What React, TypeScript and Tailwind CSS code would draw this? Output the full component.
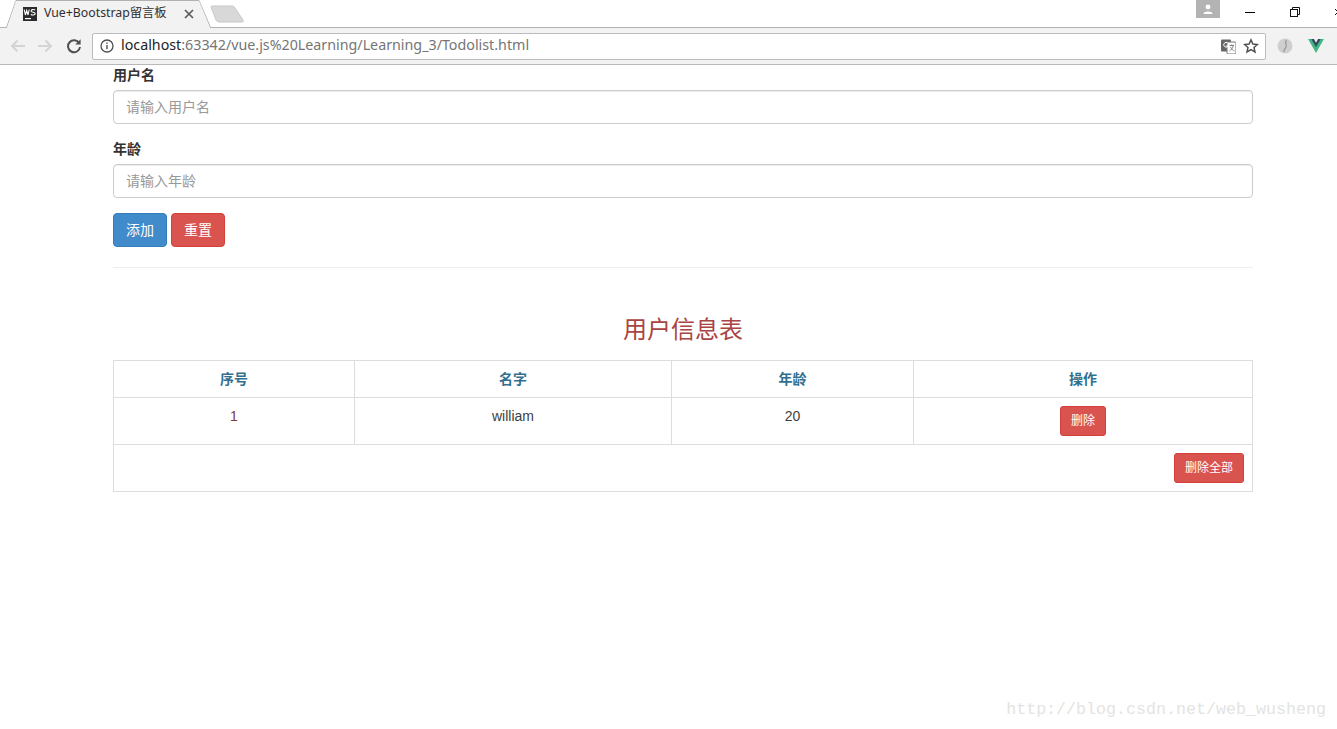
const FONT = "font-['Liberation_Sans','Noto_Sans_CJK_SC',sans-serif]";
const UI_FONT = "font-['Noto_Sans','Noto_Sans_CJK_SC',sans-serif]";

function WsLogo() {
  return (
    <svg width="14" height="14" viewBox="0 0 14 14" className="shrink-0">
      <rect width="14" height="14" fill="#2b2b2b" />
      <path d="M1.2 2.5 L2.4 8 L3.7 3.5 L5 8 L6.2 2.5" fill="none" stroke="#fff" strokeWidth="1.1" />
      <path d="M12.2 3 C10 2 8 2.6 8.2 4.2 C8.4 5.6 12.2 5 12.2 6.6 C12.2 8.2 9.5 8.4 7.8 7.6" fill="none" stroke="#fff" strokeWidth="1.1" />
      <rect x="2" y="11" width="6" height="1.2" fill="#fff" />
    </svg>
  );
}

function TabStrip() {
  return (
    <div className="relative h-[28px] bg-white border-b border-[#b2b2b2] flex">
      <svg width="260" height="28" viewBox="0 0 260 28" className="absolute left-0 top-0">
        <path d="M0 27.5 H6.5 L16 0.5 H199 L210.5 27.5" fill="#f2f2f2" stroke="#b2b2b2" strokeWidth="1" />
        <path d="M7 28 L16 1 H199 L210 28 Z" fill="#f2f2f2" />
        <path d="M211 7 Q211 6 212 6 H232 Q234 6 235 8 L243 20 Q244 22 242 22 H219 Q217 22 216 20 Z" fill="#d8d8d8" stroke="#c8c8c8" strokeWidth="1" />
      </svg>
      <div className="relative ml-[23px] w-[171px] h-[27px] flex items-center">
        <WsLogo />
        <span className={`${UI_FONT} ml-[7px] text-[12.3px] text-[#303030] whitespace-nowrap`}>Vue+Bootstrap留言板</span>
        <svg width="10" height="10" viewBox="0 0 10 10" className="ml-auto shrink-0">
          <path d="M1 1 L9 9 M9 1 L1 9" stroke="#5a5a5a" strokeWidth="1.7" />
        </svg>
      </div>
      <div className="relative ml-auto flex items-start h-[27px]">
        <div className="w-[24px] h-[18px] bg-[#b3b3b3] flex items-center justify-center">
          <svg width="12" height="10" viewBox="0 0 12 10">
            <circle cx="6" cy="3" r="2.4" fill="#fff" />
            <path d="M1.5 10 C1.5 6.8 10.5 6.8 10.5 10 Z" fill="#fff" />
          </svg>
        </div>
        <div className="w-[60px] h-[24px] flex items-center justify-center">
          <div className="w-[10px] h-px bg-black" />
        </div>
        <div className="w-[29px] h-[24px] flex items-center justify-center">
          <svg width="10" height="10" viewBox="0 0 10 10" fill="none" stroke="#111" strokeWidth="1">
            <rect x="0.5" y="2.5" width="7" height="7" />
            <path d="M2.5 2.5 V0.5 H9.5 V7.5 H7.5" />
          </svg>
        </div>
        <div className="w-[28px] h-[24px] overflow-hidden flex items-center justify-end">
          <svg width="2" height="10" viewBox="0 0 2 10">
            <path d="M0 2 L3 5 M0 8 L3 5" stroke="#111" strokeWidth="1" />
          </svg>
        </div>
      </div>
    </div>
  );
}

function Toolbar() {
  return (
    <div className="h-[37px] bg-[#f2f2f2] border-b border-[#b8b8b8] flex items-center">
      <div className="w-[92px] shrink-0 flex items-center pl-[10px] gap-[11px]">
        <svg width="16" height="14" viewBox="0 0 16 14" fill="none" stroke="#d4d4d4" strokeWidth="2">
          <path d="M15 7 H2 M7.5 1.5 L2 7 L7.5 12.5" />
        </svg>
        <svg width="16" height="14" viewBox="0 0 16 14" fill="none" stroke="#d4d4d4" strokeWidth="2">
          <path d="M1 7 H14 M8.5 1.5 L14 7 L8.5 12.5" />
        </svg>
        <svg width="16" height="16" viewBox="0 0 16 16" fill="none" className="ml-[2px]">
          <path d="M13.2 5.2 A6 6 0 1 0 14 9" stroke="#505050" strokeWidth="2" />
          <path d="M14.6 1.2 V6.6 H9.2 Z" fill="#505050" />
        </svg>
      </div>
      <div className="w-[1174px] h-[27px] shrink-0 bg-white border border-[#bcbcbc] rounded-[2px] flex items-center pl-[7px] pr-[6px]">
        <svg width="14" height="14" viewBox="0 0 14 14" fill="none" className="shrink-0">
          <circle cx="7" cy="7" r="6" stroke="#505050" strokeWidth="1.3" />
          <rect x="6.3" y="6" width="1.4" height="4.2" fill="#505050" />
          <rect x="6.3" y="3.5" width="1.4" height="1.4" fill="#505050" />
        </svg>
        <span className={`${UI_FONT} ml-[7px] pb-[2px] text-[14.28px] text-[#222] whitespace-nowrap`}>
          localhost<span className="text-[#757575]">:63342/vue.js%20Learning/Learning_3/Todolist.html</span>
        </span>
        <svg width="15" height="15" viewBox="0 0 15 15" className="ml-auto shrink-0">
          <rect x="0" y="0.5" width="10" height="12" rx="1" fill="#666" />
          <rect x="6" y="3" width="9" height="12" rx="1" fill="#fff" stroke="#777" />
          <path d="M8.5 6.5 H13 M10.7 5.5 V6.5 M12.3 6.5 C12 9 10 11 8.5 12 M9.6 8 C10.4 10 12 11.5 13.5 12" fill="none" stroke="#777" strokeWidth="0.9" />
          <path d="M6.8 4 A2.4 2.4 0 1 0 7.2 7 H5" fill="none" stroke="#fff" strokeWidth="1" />
        </svg>
        <svg width="16" height="16" viewBox="0 0 24 24" fill="none" stroke="#505050" strokeWidth="2.2" className="ml-[7px] shrink-0">
          <path d="M12 2.8 L14.8 9 L21.6 9.7 L16.5 14.2 L18 20.9 L12 17.5 L6 20.9 L7.5 14.2 L2.4 9.7 L9.2 9 Z" />
        </svg>
      </div>
      <div className="flex items-center ml-[11px] gap-[15px]">
        <svg width="16" height="16" viewBox="0 0 16 16">
          <circle cx="8" cy="8" r="7.5" fill="#cfcfcf" />
          <path d="M9.5 2 C6.5 5 11.5 7 8.5 10 C7.5 11 6.5 12 7 14" fill="none" stroke="#9a9a9a" strokeWidth="1.3" />
        </svg>
        <svg width="16" height="14" viewBox="0 0 17 15">
          <path d="M0 0 H17 L8.5 15 Z" fill="#41b883" />
          <path d="M3.5 0 H13.5 L8.5 8.8 Z" fill="#35495e" />
          <path d="M6.3 0 H10.7 L8.5 3.9 Z" fill="#f2f2f2" />
        </svg>
      </div>
    </div>
  );
}

function Field({ label, placeholder, className }: { label: string; placeholder: string; className?: string }) {
  return (
    <div className={className}>
      <label className="block h-[20px] mb-[5px] text-[14px] leading-[20px] font-bold text-[#333]">{label}</label>
      <input
        readOnly
        placeholder={placeholder}
        className="block w-full h-[34px] px-[12px] text-[14px] bg-white border border-[#ccc] rounded-[4px] shadow-[inset_0_1px_1px_rgba(0,0,0,0.075)] placeholder:text-[#999] outline-none"
      />
    </div>
  );
}

const headCell = "border border-[#ddd] h-[37px] p-0 text-center align-middle text-[14px] font-bold text-[#31708f]";
const bodyCell = "border border-[#ddd] h-[47px] pt-[8px] pb-0 px-0 text-center align-top text-[14px] leading-[20px]";
const dangerBtn = "bg-[#d9534f] border border-[#d43f3a] text-white rounded-[3px] text-[12px] leading-[18px] px-[10px] py-[5px]";

export default function App() {
  return (
    <div className={`${FONT} relative min-h-[729px] bg-white overflow-hidden`}>
      <TabStrip />
      <Toolbar />
      <main className="ml-[113px] w-[1140px]">
        <Field label="用户名" placeholder="请输入用户名" />
        <Field label="年龄" placeholder="请输入年龄" className="mt-[15px]" />
        <div className="mt-[15px] flex gap-[4px]">
          <button className="h-[34px] w-[54px] bg-[#428bca] border border-[#357ebd] text-white text-[14px] rounded-[4px]">添加</button>
          <button className="h-[34px] w-[54px] bg-[#d9534f] border border-[#d43f3a] text-white text-[14px] rounded-[4px]">重置</button>
        </div>
        <hr className="mt-[20px] border-0 border-t border-[#eee]" />
        <h2 className="mt-[45px] h-[33px] leading-[33px] text-center text-[24px] font-normal text-[#a94442]">用户信息表</h2>
        <table className="mt-[14px] w-[1139px] table-fixed border-collapse">
          <colgroup>
            <col className="w-[241px]" />
            <col className="w-[317px]" />
            <col className="w-[242px]" />
            <col className="w-[339px]" />
          </colgroup>
          <thead>
            <tr>
              <th className={headCell}>序号</th>
              <th className={headCell}>名字</th>
              <th className={headCell}>年龄</th>
              <th className={headCell}>操作</th>
            </tr>
          </thead>
          <tbody>
            <tr>
              <td className={`${bodyCell} text-[#80392e]`}>1</td>
              <td className={`${bodyCell} text-[#404040]`}>william</td>
              <td className={`${bodyCell} text-[#404040]`}>20</td>
              <td className={bodyCell}>
                <button className={dangerBtn}>删除</button>
              </td>
            </tr>
            <tr>
              <td colSpan={4} className={`${bodyCell} text-right pr-[8px]`}>
                <button className={dangerBtn}>删除全部</button>
              </td>
            </tr>
          </tbody>
        </table>
      </main>
      <div className="absolute right-[11px] top-[699px] font-['Liberation_Mono',monospace] text-[16.67px] leading-[22px] text-[#e4e4df] whitespace-nowrap">
        http://blog.csdn.net/web_wusheng
      </div>
    </div>
  );
}
